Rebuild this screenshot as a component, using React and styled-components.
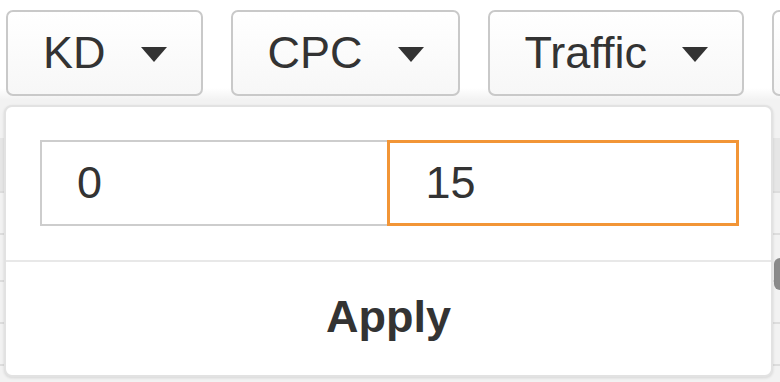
import React from 'react';
import styled, { createGlobalStyle } from 'styled-components';

const GlobalStyle = createGlobalStyle`
  html, body {
    margin: 0;
    padding: 0;
    background: #ffffff;
    overflow: hidden;
  }
  body {
    font-family: "Liberation Sans", Arial, sans-serif;
    color: #333333;
  }
`;

const Page = styled.div`
  position: relative;
  width: 780px;
  height: 382px;
  overflow: hidden;
  background: linear-gradient(to bottom, #ffffff 0px, #ffffff 88px, #f2f2f2 100px, #f2f2f2 137px);
`;

const Toolbar = styled.div`
  display: flex;
  gap: 28px;
  padding: 10px 0 0 6px;
  white-space: nowrap;
`;

const FilterButton = styled.button`
  flex: none;
  display: flex;
  align-items: center;
  gap: 35px;
  height: 86px;
  min-width: 60px;
  padding: 0 34px 0 35px;
  border: 2px solid #c9c9c9;
  border-radius: 7px;
  background: linear-gradient(to bottom, #ffffff, #f7f7f7);
  font-family: "Liberation Sans", Arial, sans-serif;
  font-size: 45px;
  color: #333333;
  cursor: pointer;
`;

const Caret = styled.span`
  width: 0;
  height: 0;
  border-left: 13px solid transparent;
  border-right: 13px solid transparent;
  border-top: 15px solid #333333;
  margin-top: 2px;
`;

const Table = styled.div`
  margin-top: 42px;
  display: flex;
  flex-direction: column;
`;

const HeaderRow = styled.div`
  height: 53px;
  background: #e6e6e6;
  border-bottom: 2px solid #dddddd;
`;

const Row = styled.div`
  height: ${p => p.$h}px;
  border-bottom: 2px solid #dddddd;
`;

const ScrollThumb = styled.div`
  position: absolute;
  right: -6px;
  top: 258px;
  width: 12px;
  height: 32px;
  border-radius: 6px;
  background: #8a8a8a;
`;

const Popup = styled.div`
  position: absolute;
  left: 4px;
  top: 105px;
  width: 769px;
  height: 272px;
  box-sizing: border-box;
  background: #ffffff;
  border: 2px solid #e2e2e2;
  border-radius: 8px;
  box-shadow: 0 1px 3px rgba(0, 0, 0, 0.12);
  display: flex;
  flex-direction: column;
`;

const RangeRow = styled.div`
  display: flex;
  padding: 33px 32px 34px 34px;
  border-bottom: 2px solid #e8e8e8;
`;

const RangeInput = styled.input`
  flex: 1;
  min-width: 0;
  height: 86px;
  box-sizing: border-box;
  margin: 0;
  padding: 0 0 0 ${p => (p.$focused ? 36 : 35)}px;
  border: ${p => (p.$focused ? '3px solid #f29536' : '2px solid #cdcdcd')};
  ${p => (p.$focused ? 'margin-left: -1px;' : 'border-right: none;')}
  background: #ffffff;
  font-family: "Liberation Sans", Arial, sans-serif;
  font-size: 45px;
  color: #333333;
  outline: none;
`;

const ApplyButton = styled.button`
  flex: 1;
  border: none;
  background: transparent;
  font-family: "Liberation Sans", Arial, sans-serif;
  font-size: 45px;
  font-weight: 700;
  color: #333333;
  padding: 0 0 4px;
  cursor: pointer;
`;

const filters = ['KD', 'CPC', 'Traffic'];

export default function App() {
  return (
    <>
      <GlobalStyle />
      <Page>
        <Toolbar>
          {filters.map(f => (
            <FilterButton key={f}>
              {f}
              <Caret />
            </FilterButton>
          ))}
          <FilterButton aria-label="More filters" />
        </Toolbar>
        <Table>
          <HeaderRow />
          <Row $h={40} />
          <Row $h={45} />
          <Row $h={40} />
          <Row $h={40} />
        </Table>
        <ScrollThumb />
        <Popup>
          <RangeRow>
            <RangeInput defaultValue="0" />
            <RangeInput defaultValue="15" $focused />
          </RangeRow>
          <ApplyButton>Apply</ApplyButton>
        </Popup>
      </Page>
    </>
  );
}
